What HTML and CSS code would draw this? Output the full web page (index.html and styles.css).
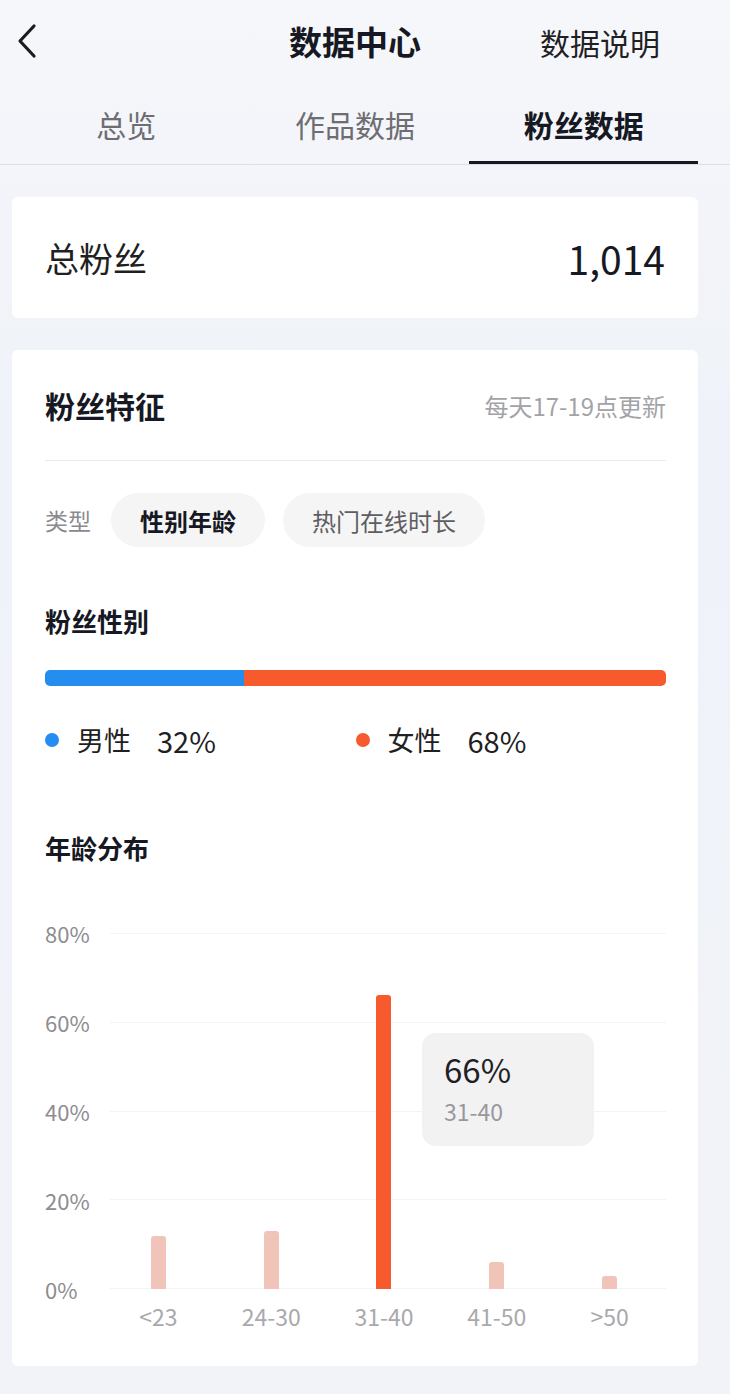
FILE: index.html
```html
<!DOCTYPE html>
<html lang="zh-CN">
<head>
    <meta charset="UTF-8">
    <meta name="viewport" content="width=device-width, initial-scale=1.0">
    <title>数据中心</title>
    <link rel="stylesheet" href="styles.css">
</head>
<body>
    <div class="top">
        <div class="frame">
            <div class="nav">
                <span class="back">
                    <svg width="22" height="36" viewBox="0 0 22 36">
                        <polyline points="18,3 4,18 18,33" fill="none" stroke="#1c1c1e" stroke-width="3.2" stroke-linecap="round" stroke-linejoin="round"/>
                    </svg>
                </span>
                <span class="nav-title">数据中心</span>
                <span class="nav-link">数据说明</span>
            </div>
            <div class="tabs">
                <div class="tab">总览</div>
                <div class="tab">作品数据</div>
                <div class="tab active">粉丝数据</div>
            </div>
        </div>
    </div>

    <div class="frame">
        <div class="card total">
            <span class="total-label">总粉丝</span>
            <span class="total-num">1,014</span>
        </div>

        <div class="card fans">
            <div class="fans-head">
                <span class="fans-title">粉丝特征</span>
                <span class="fans-note">每天17-19点更新</span>
            </div>

            <div class="type-row">
                <span class="type-label">类型</span>
                <span class="chip on">性别年龄</span>
                <span class="chip">热门在线时长</span>
            </div>

            <div class="sub-title gender-title">粉丝性别</div>
            <div class="gender-bar">
                <div class="male" style="width: 32%"></div>
                <div class="female"></div>
            </div>
            <div class="legend">
                <div class="legend-item"><i class="dot blue"></i><span class="lg-name">男性</span><span class="lg-pct">32%</span></div>
                <div class="legend-item"><i class="dot orange"></i><span class="lg-name">女性</span><span class="lg-pct">68%</span></div>
            </div>

            <div class="sub-title age-title">年龄分布</div>
            <div class="chart">
                <div class="y-axis">
                    <span>80%</span>
                    <span>60%</span>
                    <span>40%</span>
                    <span>20%</span>
                    <span>0%</span>
                </div>
                <div class="plot">
                    <div class="grid-lines">
                        <i></i><i></i><i></i><i></i><i></i>
                    </div>
                    <div class="bars">
                        <div class="col"><div class="bar" style="height: 15%"></div></div>
                        <div class="col"><div class="bar" style="height: 16.25%"></div></div>
                        <div class="col"><div class="bar hot" style="height: 82.5%"></div></div>
                        <div class="col"><div class="bar" style="height: 7.5%"></div></div>
                        <div class="col"><div class="bar" style="height: 3.75%"></div></div>
                    </div>
                    <div class="tooltip">
                        <div class="tip-val">66%</div>
                        <div class="tip-key">31-40</div>
                    </div>
                </div>
                <div></div>
                <div class="x-axis">
                    <span>&lt;23</span>
                    <span>24-30</span>
                    <span>31-40</span>
                    <span>41-50</span>
                    <span>&gt;50</span>
                </div>
            </div>
        </div>
    </div>
</body>
</html>
```

FILE: styles.css
```css
body {
    margin: 0;
    font-family: "Noto Sans CJK SC", "Noto Sans", sans-serif;
    color: #161823;
    background: linear-gradient(180deg, #f6f7fb 0%, #eff2f8 30%, #f1f3f9 100%);
    min-height: 1394px;
}
.frame {
    margin: 0 32px 0 12px;
}
.top {
    border-bottom: 1px solid #dde0e6;
}
.nav {
    height: 84px;
    display: flex;
    align-items: center;
    position: relative;
}
.back {
    display: flex;
    margin-left: 4px;
    margin-top: -3px;
}
.nav-title {
    position: absolute;
    left: 0;
    right: 0;
    top: 19px;
    line-height: 44px;
    text-align: center;
    font-size: 33px;
    font-weight: 700;
    pointer-events: none;
}
.nav-link {
    margin-left: auto;
    margin-right: 38px;
    font-size: 30px;
    color: #1f1f24;
}
.tabs {
    display: grid;
    grid-template-columns: 1fr 1fr 1fr;
    height: 80px;
}
.tab {
    display: flex;
    align-items: center;
    justify-content: center;
    font-size: 30px;
    color: #6e6e72;
    border-bottom: 3px solid transparent;
    padding-top: 3px;
}
.tab.active {
    color: #161823;
    font-weight: 700;
    border-bottom-color: #161823;
}
.card {
    background: #fff;
    border-radius: 6px;
}
.total {
    margin-top: 32px;
    height: 121px;
    display: flex;
    align-items: center;
    justify-content: space-between;
    padding: 0 33px;
}
.total-label {
    font-size: 34px;
    color: #1f1f24;
}
.total-num {
    font-size: 39px;
    color: #161823;
}
.fans {
    margin-top: 32px;
    padding: 0 32px 35px 33px;
}
.fans-head {
    height: 110px;
    display: flex;
    align-items: center;
    justify-content: space-between;
    border-bottom: 1px solid #ebebed;
}
.fans-title {
    font-size: 30px;
    font-weight: 700;
}
.fans-note {
    font-size: 24px;
    color: #a3a3a7;
}
.type-row {
    margin-top: 32px;
    display: flex;
    align-items: center;
}
.type-label {
    font-size: 23px;
    color: #8a8a8e;
    margin-right: 20px;
}
.chip {
    height: 54px;
    padding: 0 29px;
    border-radius: 27px;
    background: #f5f5f6;
    display: flex;
    align-items: center;
    font-size: 24px;
    color: #5e5e62;
    margin-right: 18px;
}
.chip.on {
    color: #161823;
    font-weight: 700;
}
.sub-title {
    font-size: 26px;
    font-weight: 700;
    line-height: 36px;
}
.gender-title {
    margin-top: 56px;
}
.gender-bar {
    margin-top: 31px;
    height: 16px;
    border-radius: 5px;
    overflow: hidden;
    display: flex;
}
.male {
    background: #238df0;
}
.female {
    flex: 1;
    background: #f75a2d;
}
.legend {
    margin-top: 36px;
    display: grid;
    grid-template-columns: 1fr 1fr;
    line-height: 36px;
    font-size: 27px;
    color: #1f1f24;
}
.legend-item {
    display: flex;
    align-items: center;
}
.dot {
    width: 14px;
    height: 14px;
    border-radius: 50%;
    margin-right: 18px;
}
.dot.blue {
    background: #238df0;
}
.dot.orange {
    background: #f75a2d;
}
.lg-name {
    margin-right: 26px;
}
.lg-pct {
    font-size: 29px;
}
.age-title {
    margin-top: 72px;
}
.chart {
    margin-top: 67px;
    display: grid;
    grid-template-columns: 57px 1fr;
    grid-template-rows: 356px auto;
}
.y-axis {
    display: flex;
    flex-direction: column;
    justify-content: space-between;
    font-size: 22px;
    color: #8d8d91;
}
.y-axis span {
    line-height: 0;
    height: 0;
}
.plot {
    display: grid;
    position: relative;
}
.grid-lines,
.bars {
    grid-area: 1 / 1;
}
.grid-lines {
    display: flex;
    flex-direction: column;
    justify-content: space-between;
    padding-left: 8px;
}
.grid-lines i {
    height: 1px;
    background: #f4f4f6;
}
.bars {
    display: flex;
}
.col {
    flex: 1;
    display: flex;
    justify-content: center;
    align-items: flex-end;
}
.bar {
    width: 15px;
    background: #f1c4ba;
    border-radius: 3px 3px 0 0;
}
.bar.hot {
    background: #f75a2d;
}
.tooltip {
    position: absolute;
    left: 320px;
    top: 100px;
    width: 150px;
    height: 113px;
    padding-left: 22px;
    background: #f2f2f3;
    border-radius: 14px;
}
.tip-val {
    margin-top: 15px;
    font-size: 33px;
    line-height: 42px;
    color: #1f1f24;
}
.tip-key {
    margin-top: 6px;
    font-size: 23px;
    line-height: 30px;
    color: #98989c;
}
.x-axis {
    margin-top: 12px;
    display: flex;
    line-height: 30px;
    font-size: 23px;
    color: #a9a9ad;
}
.x-axis span {
    flex: 1;
    text-align: center;
}
```
